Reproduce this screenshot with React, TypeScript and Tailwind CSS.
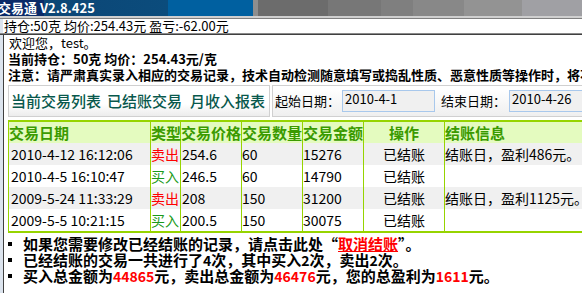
import React from 'react'

const rows = [
  { date: '2010-4-12 16:12:06', type: '卖出', price: '254.6', qty: '60', amount: '15276', info: '结账日，盈利486元。' },
  { date: '2010-4-5 16:10:47', type: '买入', price: '246.5', qty: '60', amount: '14790', info: '' },
  { date: '2009-5-24 11:33:29', type: '卖出', price: '208', qty: '150', amount: '31200', info: '结账日，盈利1125元。' },
  { date: '2009-5-5 10:21:15', type: '买入', price: '200.5', qty: '150', amount: '30075', info: '' },
]

function Bullet({ children }: { children: React.ReactNode }) {
  return (
    <div className="flex items-center h-[16px] whitespace-nowrap">
      <span className="w-[4px] h-[4px] bg-black ml-[8px] mr-[11px]" />
      {children}
    </div>
  )
}

function Red({ children }: { children: React.ReactNode }) {
  return <span className="text-[#ff0000] text-[14px]">{children}</span>
}

export default function App() {
  return (
    <div
      className="w-[582px] h-[293px] overflow-hidden bg-white text-black"
      style={{ fontFamily: '"Noto Sans CJK SC", "Liberation Sans", sans-serif' }}
    >
      {/* 标题栏 */}
      <div className="h-[16px] flex items-center bg-[linear-gradient(90deg,#0a2a68_0,#0a2a68_44px,#0c4676_44px,#0b4c7c_168px,#0060a0_168px,#0060a0_253px,#8e8e8e_253px,#8e8e8e_258px,#6c6c6c_258px,#6c6c6c_328px,#777777_328px,#777777_381px,#7f7f7f_381px,#7f7f7f_413px,#888888_413px,#888888_464px,#939393_464px,#939393_522px,#a0a0a4_522px)]">
        <span className="ml-[-2px] text-white font-bold text-[13px] leading-[16px] whitespace-nowrap">交易通 V2.8.425</span>
      </div>
      <div className="h-[2px] bg-[#cfcfcf]" />
      <div className="h-[1px] bg-[#808080]" />

      {/* 持仓信息 */}
      <div className="flex h-[14px]">
        <div className="w-[3px] bg-[#dce4ee]" />
        <div className="pl-[1px] text-[13px] leading-[14px] whitespace-nowrap">持仓:50克 均价:254.43元 盈亏:-62.00元</div>
      </div>
      <div className="h-[1px] bg-[#8a8a8a]" />
      <div className="h-[1px] bg-[#404040]" />

      <div className="flex h-[258px]">
        <div className="w-[3px] bg-[#dce4ee] shrink-0" />
        <div className="w-[1px] bg-[#404040] shrink-0" />
        <div className="flex-1 min-w-0 overflow-hidden pl-[4px]">
          <div className="text-[13px] leading-[16px] pl-[1px] whitespace-nowrap">欢迎您，test。</div>
          <div className="text-[13px] leading-[16px] font-bold whitespace-nowrap">当前持仓：50克 均价：254.43元/克</div>
          <div className="text-[13px] leading-[16px] font-bold whitespace-nowrap">注意：请严肃真实录入相应的交易记录，技术自动检测随意填写或捣乱性质、恶意性质等操作时，将不予结账。</div>

          {/* 选项卡与日期 */}
          <div className="flex gap-[2px] mt-[2px] h-[32px] whitespace-nowrap">
            <div className="w-[262px] shrink-0 border border-[#d0d0d0] bg-gradient-to-b from-white from-60% to-[#ececec] flex items-center pl-[2px] text-[15px] font-medium text-[#08584c]">
              <span>当前交易列表</span>
              <span className="ml-[6px]">已结账交易</span>
              <span className="ml-[8px]">月收入报表</span>
            </div>
            <div className="w-[330px] shrink-0 border border-[#d0d0d0] border-r-0 bg-gradient-to-b from-white from-10% to-[#efefef] flex items-center text-[13px]">
              <span className="ml-[2px]">起始日期：</span>
              <div className="ml-[2px] w-[93px] h-[22px] border border-[#a8c8ec] bg-[#f0f0f0] pl-[2px] text-[13px] leading-[16px]">2010-4-1</div>
              <span className="ml-[6px]">结束日期：</span>
              <div className="ml-[3px] w-[93px] h-[22px] border border-[#a8c8ec] bg-[#f0f0f0] pl-[2px] text-[13px] leading-[16px]">2010-4-26</div>
            </div>
          </div>

          {/* 交易表格 */}
          <table className="mt-[3px] border-collapse table-fixed w-[597px] border-t-2 border-b-2 border-[#96d400] whitespace-nowrap">
            <colgroup>
              <col className="w-[142px]" />
              <col className="w-[30px]" />
              <col className="w-[61px]" />
              <col className="w-[61px]" />
              <col className="w-[61px]" />
              <col className="w-[81px]" />
              <col className="w-[161px]" />
            </colgroup>
            <thead>
              <tr className="h-[21px] bg-[#e4fbbf] text-[#3a9a00] text-[15px] leading-[21px]">
                <th className="border-l border-r border-[#96d400] text-left font-bold p-0">交易日期</th>
                <th className="border-r border-[#96d400] text-left font-bold p-0 overflow-visible">类型</th>
                <th className="border-r border-[#96d400] text-left font-bold p-0">交易价格</th>
                <th className="border-r border-[#96d400] text-left font-bold p-0">交易数量</th>
                <th className="border-r border-[#96d400] text-left font-bold p-0">交易金额</th>
                <th className="border-r border-[#96d400] text-center font-bold p-0">操作</th>
                <th className="text-left font-bold p-0">结账信息</th>
              </tr>
            </thead>
            <tbody className="text-[14px] leading-[22px]">
              {rows.map((r, i) => (
                <tr key={i} className={`h-[22px] ${i % 2 === 0 ? 'bg-[#f0f0f0]' : 'bg-white'}`}>
                  <td className="border-l border-r border-[#96d400] p-0 pl-[2px]">{r.date}</td>
                  <td className={`border-r border-[#96d400] p-0 ${r.type === '卖出' ? 'text-[#ff0000]' : 'text-[#1a9a1a]'}`}>{r.type}</td>
                  <td className="border-r border-[#96d400] p-0 pl-[1px]">{r.price}</td>
                  <td className="border-r border-[#96d400] p-0">{r.qty}</td>
                  <td className="border-r border-[#96d400] p-0">{r.amount}</td>
                  <td className="border-r border-[#96d400] p-0 text-center">已结账</td>
                  <td className="p-0">{r.info}</td>
                </tr>
              ))}
            </tbody>
          </table>

          {/* 说明 */}
          <div className="mt-[3px] text-[15px] leading-[16px] font-bold -ml-[8px]">
            <Bullet>
              如果您需要修改已经结账的记录，请点击此处“<span className="text-[#ff0000] underline">取消结账</span>”。
            </Bullet>
            <Bullet>已经结账的交易一共进行了<span className="text-[14px]">4</span>次，其中买入<span className="text-[14px]">2</span>次，卖出<span className="text-[14px]">2</span>次。</Bullet>
            <Bullet>
              买入总金额为<Red>44865</Red>元，卖出总金额为<Red>46476</Red>元，您的总盈利为<Red>1611</Red>元。
            </Bullet>
          </div>
        </div>
      </div>
    </div>
  )
}
